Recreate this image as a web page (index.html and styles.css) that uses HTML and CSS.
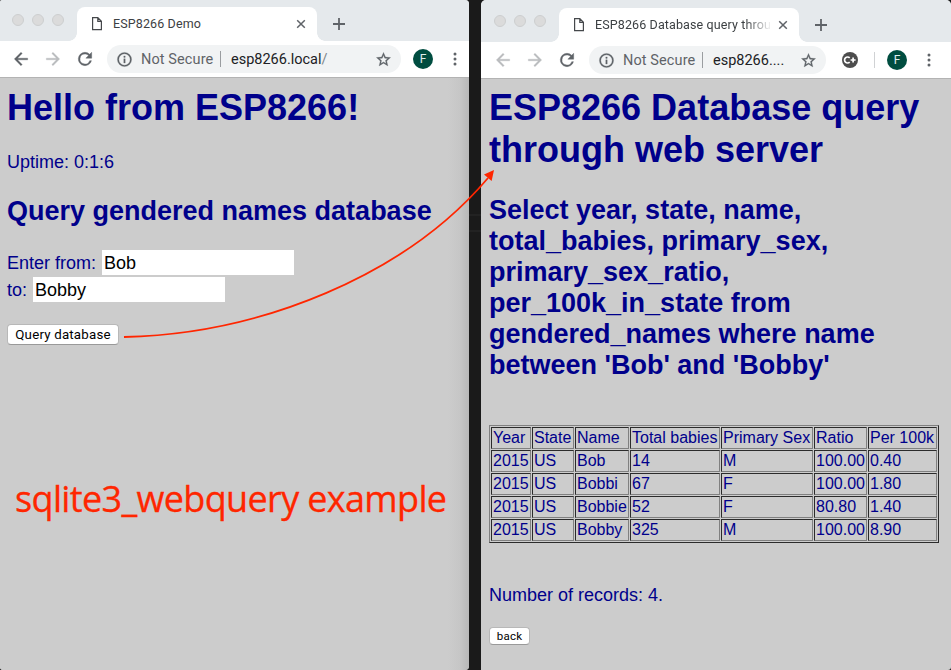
FILE: index.html
```
<!DOCTYPE html>
<html lang="en">
<head>
<meta charset="utf-8">
<title>ESP8266 Demo</title>
<link rel="stylesheet" href="styles.css">
</head>
<body>
<svg class="defs" aria-hidden="true">
  <symbol id="page" viewBox="0 0 12 16"><path d="M1.6 1.7h5.2l3.6 3.6v8.4H1.6zM6.8 1.7v3.6h3.6" fill="none" stroke="#45484b" stroke-width="1.2"/></symbol>
  <symbol id="close" viewBox="0 0 10 10"><path d="M1.2 1.2l7.6 7.6M8.8 1.2L1.2 8.8" stroke="#5f6368" stroke-width="1.5"/></symbol>
  <symbol id="plus" viewBox="0 0 12 12"><path d="M6 0v12M0 6h12" stroke="#5f6368" stroke-width="1.8"/></symbol>
  <symbol id="arrow" viewBox="0 0 24 24"><path d="M20 11H7.83l5.59-5.59L12 4l-8 8 8 8 1.41-1.41L7.83 13H20v-2z" fill="currentColor" stroke="currentColor" stroke-width=".4"/></symbol>
  <symbol id="reload" viewBox="0 0 24 24"><path d="M17.65 6.35A7.96 7.96 0 0 0 12 4a8 8 0 1 0 7.73 10h-2.08A6 6 0 1 1 12 6c1.66 0 3.14.69 4.22 1.78L13 11h7V4l-2.35 2.35z" fill="#5f6368" stroke="#5f6368" stroke-width=".5"/></symbol>
  <symbol id="info" viewBox="0 0 24 24"><path d="M11 17h2v-6h-2v6zm1-15a10 10 0 1 0 0 20 10 10 0 0 0 0-20zm0 18a8 8 0 1 1 0-16 8 8 0 0 1 0 16zM11 9h2V7h-2v2z" fill="#5f6368" stroke="#5f6368" stroke-width=".4"/></symbol>
  <symbol id="star" viewBox="0 0 24 24"><path d="M22 9.24l-7.19-.62L12 2 9.19 8.63 2 9.24l5.46 4.73L5.82 21 12 17.27 18.18 21l-1.63-7.03L22 9.24zM12 15.4l-3.76 2.27 1-4.28-3.32-2.88 4.38-.38L12 6.1l1.71 4.04 4.38.38-3.32 2.88 1 4.28L12 15.4z" fill="#5f6368" stroke="#5f6368" stroke-width=".4"/></symbol>
  <symbol id="dots" viewBox="0 0 4 14"><g fill="#5f6368"><circle cx="2" cy="2" r="1.5"/><circle cx="2" cy="7" r="1.5"/><circle cx="2" cy="12" r="1.5"/></g></symbol>
  <symbol id="ext" viewBox="0 0 16 16"><circle cx="8" cy="8" r="8" fill="#4d4d4d"/><path d="M7.7 5.9a3 3 0 1 0 0 4.2M8.6 8h5M11.1 5.5v5" fill="none" stroke="#fff" stroke-width="1.7"/></symbol>
</svg>
<main class="desktop">
  <section class="window left">
    <header class="strip">
      <div class="lights"><i></i><i></i><i></i></div>
      <div class="tab"><svg class="doc"><use href="#page"/></svg><span class="title">ESP8266 Demo</span><svg class="close"><use href="#close"/></svg></div>
      <svg class="plus"><use href="#plus"/></svg>
    </header>
    <nav class="toolbar">
      <svg class="ico back"><use href="#arrow"/></svg>
      <svg class="ico fwd off"><use href="#arrow"/></svg>
      <svg class="ico reload"><use href="#reload"/></svg>
      <div class="omnibox"><svg class="info"><use href="#info"/></svg><span class="secure">Not Secure</span><span class="bar"></span><span class="url">esp8266.local<em>/</em></span><svg class="star"><use href="#star"/></svg></div>
      <span class="avatar">F</span>
      <svg class="dots"><use href="#dots"/></svg>
    </nav>
    <article class="page">
      <h1>Hello from ESP8266!</h1>
      <p class="uptime">Uptime: 0:1:6</p>
      <h2>Query gendered names database</h2>
      <form>
        <label><span class="from">Enter from:</span><input type="text" value="Bob"></label>
        <label><span class="to">to:</span><input type="text" value="Bobby"></label>
        <button type="button" class="query">Query database</button>
      </form>
      <p class="caption">sqlite3_webquery example</p>
    </article>
  </section>
  <div class="gap"></div>
  <section class="window right">
    <header class="strip">
      <div class="lights"><i></i><i></i><i></i></div>
      <div class="tab"><svg class="doc"><use href="#page"/></svg><span class="title">ESP8266 Database query throu</span><svg class="close"><use href="#close"/></svg></div>
      <svg class="plus"><use href="#plus"/></svg>
    </header>
    <nav class="toolbar">
      <svg class="ico back off"><use href="#arrow"/></svg>
      <svg class="ico fwd off"><use href="#arrow"/></svg>
      <svg class="ico reload"><use href="#reload"/></svg>
      <div class="omnibox"><svg class="info"><use href="#info"/></svg><span class="secure">Not Secure</span><span class="bar"></span><span class="url">esp8266....</span><svg class="star"><use href="#star"/></svg></div>
      <svg class="ext"><use href="#ext"/></svg>
      <span class="divider"></span>
      <span class="avatar">F</span>
      <svg class="dots"><use href="#dots"/></svg>
    </nav>
    <article class="page">
      <h1>ESP8266 Database query<br>through web server</h1>
      <h2>Select year, state, name,<br>total_babies, primary_sex,<br>primary_sex_ratio,<br>per_100k_in_state from<br>gendered_names where name<br>between 'Bob' and 'Bobby'</h2>
      <table>
        <colgroup><col class="c1"><col class="c2"><col class="c3"><col class="c4"><col class="c5"><col class="c6"><col class="c7"></colgroup>
        <tr><td>Year</td><td>State</td><td>Name</td><td>Total babies</td><td>Primary Sex</td><td>Ratio</td><td>Per 100k</td></tr>
        <tr><td>2015</td><td>US</td><td>Bob</td><td>14</td><td>M</td><td>100.00</td><td>0.40</td></tr>
        <tr><td>2015</td><td>US</td><td>Bobbi</td><td>67</td><td>F</td><td>100.00</td><td>1.80</td></tr>
        <tr><td>2015</td><td>US</td><td>Bobbie</td><td>52</td><td>F</td><td>80.80</td><td>1.40</td></tr>
        <tr><td>2015</td><td>US</td><td>Bobby</td><td>325</td><td>M</td><td>100.00</td><td>8.90</td></tr>
      </table>
      <p class="records">Number of records: 4.</p>
      <button type="button" class="backbtn">back</button>
    </article>
  </section>
  <svg class="pointer" viewBox="0 0 951 670"><path d="M124 337C260 334 405 276 488 178" fill="none" stroke="#ff2600" stroke-width="1.8"/><path d="M494 170l-10 4.5 7.6 6.5z" fill="#ff2600"/></svg>
</main>
</body>
</html>
```
FILE: styles.css
```
* { box-sizing: border-box; }
body { margin: 0; background: #1a1a1a; font-family: "Liberation Sans", Arial, sans-serif; overflow: hidden; }
.defs { position: absolute; width: 0; height: 0; }
.desktop { position: relative; display: flex; width: 951px; height: 670px; }
.window { display: flex; flex-direction: column; background: #ccc; overflow: hidden; }
.left { width: 469px; border-radius: 2px 4px 4px 3px; }
.right { width: 470px; border-radius: 5px 5px 3px 0; }
.gap { width: 12px; background: linear-gradient(#1a1a1a 214px, #222 214px 216px, #1a1a1a 216px 230px, #222 230px 232px, #1a1a1a 232px); }

.strip { display: flex; height: 41px; padding-top: 7px; background: #e5e9ec; flex: none; }
.right .strip { height: 42px; padding-top: 8px; }
.lights { display: flex; gap: 8px; width: 77px; padding: 7px 0 0 12px; }
.right .lights { width: 78px; padding-left: 13px; }
.lights i { width: 12px; height: 12px; border-radius: 50%; background: #dbdbdb; border: 1px solid #cdcfd0; }
.tab { position: relative; display: flex; align-items: center; width: 240px; height: 34px; background: #fff; border-radius: 8px 8px 0 0; padding: 0 11px 0 14px; }
.tab::before, .tab::after { content: ""; position: absolute; bottom: 0; width: 8px; height: 8px; }
.tab::before { left: -8px; background: radial-gradient(circle at 0 0, transparent 7.5px, #fff 8px); }
.tab::after { right: -8px; background: radial-gradient(circle at 100% 0, transparent 7.5px, #fff 8px); }
.doc { width: 12px; height: 16px; flex: none; }
.title { flex: 1; min-width: 0; margin-left: 10px; padding-bottom: 2px; font: 12.5px Roboto, sans-serif; letter-spacing: .12px; color: #3c4043; white-space: nowrap; }
.right .title { margin-right: 6px; -webkit-mask-image: linear-gradient(90deg, #000 150px, transparent 177px); mask-image: linear-gradient(90deg, #000 150px, transparent 177px); }
.close { width: 10px; height: 10px; flex: none; }
.plus { width: 12px; height: 12px; margin: 11px 0 0 16px; }

.toolbar { display: flex; align-items: center; height: 37px; background: #fff; border-bottom: 1px solid #b3b3b3; flex: none; padding-left: 11px; }
.right .toolbar { padding-left: 12px; }
.ico { width: 20px; height: 20px; margin-right: 12px; color: #5f6368; flex: none; }
.off { color: #babcbe; }
.fwd { transform: scaleX(-1); }
.omnibox { display: flex; align-items: center; width: 294px; height: 28px; border-radius: 14px; background: #f1f3f4; padding: 0 9px 0 9px; font: 14.5px Roboto, sans-serif; }
.right .omnibox { width: 237px; }
.info { width: 17px; height: 17px; flex: none; }
.secure { width: 72px; margin-left: 8px; color: #5f6368; letter-spacing: .1px; white-space: nowrap; }
.bar { width: 1px; height: 16px; background: #9a9da0; margin: 0 10px 0 7px; }
.url { flex: 1; color: #202124; white-space: nowrap; letter-spacing: 0; }
.url em { font-style: normal; color: #80868b; }
.star { width: 17px; height: 17px; flex: none; }
.avatar { width: 20px; height: 20px; margin-left: 12px; border-radius: 50%; background: #004d40; color: #e0eeec; font: 12px/20px Roboto, sans-serif; text-align: center; }
.dots { width: 4px; height: 14px; margin-left: 20px; }
.ext { width: 16px; height: 16px; margin-left: 16px; }
.divider { width: 1px; height: 16px; background: #d0d2d4; margin-left: 16px; }

.page { flex: 1; padding: 8px 7px; color: #00008b; font-size: 18px; line-height: 21px; }
.right .page { padding-left: 8px; }
.left .page { padding-top: 9px; background: linear-gradient(90deg, #ccc 448px, #c6c6c6 460px, #b8b8b8 469px); }
h1 { margin: 0 0 24px; font-size: 36px; line-height: 42px; white-space: nowrap; }
.left h1 { margin-bottom: 23px; }
h2 { margin: 0; font-size: 27px; line-height: 31px; white-space: nowrap; }
p { margin: 0; }
.uptime { margin-bottom: 23px; }
form { display: flex; flex-direction: column; align-items: flex-start; gap: 2px; margin-top: 23px; }
label { display: flex; align-items: center; height: 25px; }
.from, .to { padding-top: 2px; }
.from { width: 95px; white-space: nowrap; }
.to { width: 26px; }
input { width: 192px; height: 25px; border: 0; padding: 1px 2px 0; background: #fff; color: #000; font: 18px "Liberation Sans", Arial, sans-serif; }
button { display: block; padding: 0; background: #fff; color: #000; border: 1px solid #b8b8b8; border-bottom-color: #999; border-radius: 4px; font-family: Roboto, sans-serif; white-space: nowrap; }
.query { width: 112px; height: 21px; margin-top: 20px; font-size: 13.3px; line-height: 18px; letter-spacing: .2px; }
.caption { margin: 130px 0 0 8px; font: 36px/48px "Open Sans", sans-serif; letter-spacing: -.65px; color: #ff2600; -webkit-text-stroke: .3px #ff2600; white-space: nowrap; }

table { width: 450px; margin-top: 44px; table-layout: fixed; border: 1px solid; border-color: #808080 #2b2b2b #2b2b2b #808080; border-spacing: 1px; font-size: 16px; line-height: 18px; }
td { height: 22px; padding: 1px 1px 1px; border: 1px solid; border-color: #2b2b2b #808080 #808080 #2b2b2b; white-space: nowrap; }
.c1 { width: 40px; } .c2 { width: 42px; } .c3 { width: 54px; } .c4 { width: 90px; } .c5 { width: 92px; } .c6 { width: 53px; } .c7 { width: 69px; }
.records { margin-top: 42px; }
.backbtn { width: 41px; height: 18px; margin-top: 21px; font-size: 11.5px; line-height: 15px; letter-spacing: .2px; }
.pointer { position: absolute; inset: 0; width: 951px; height: 670px; pointer-events: none; }
```
